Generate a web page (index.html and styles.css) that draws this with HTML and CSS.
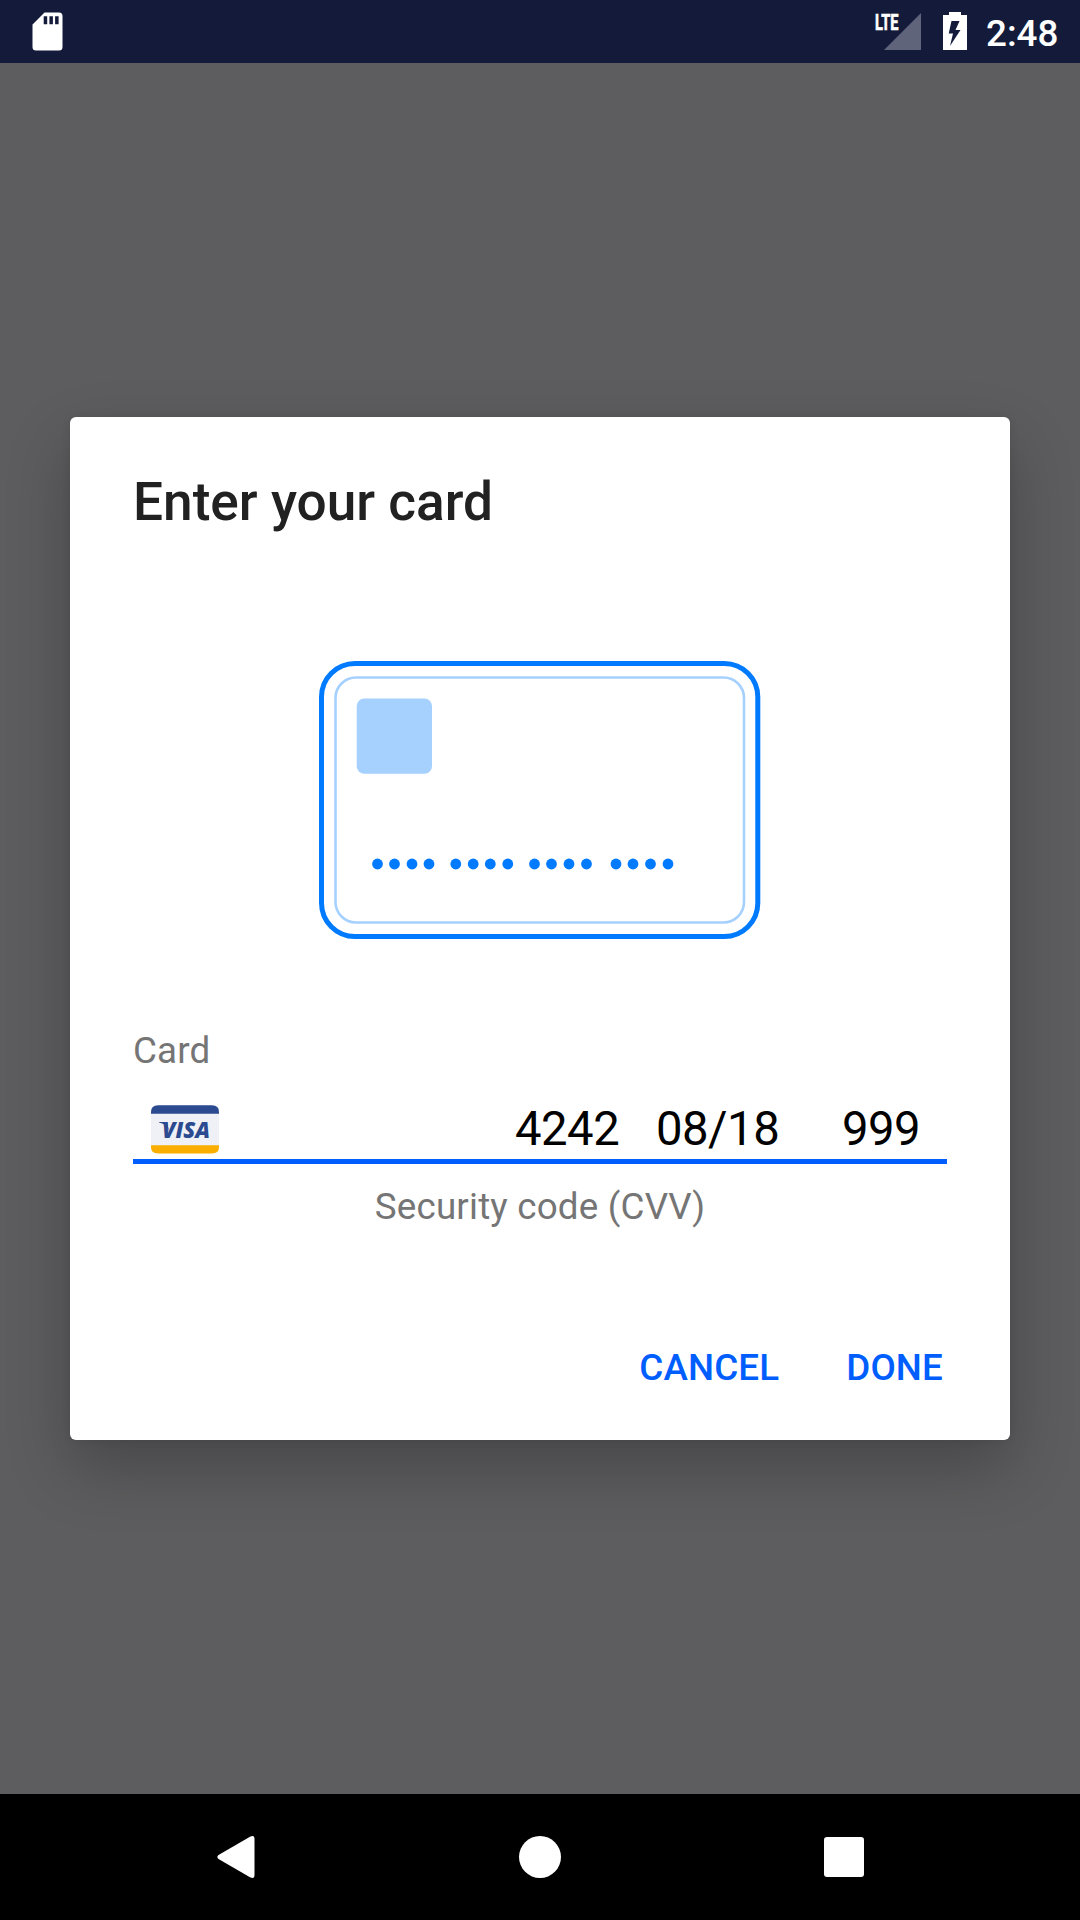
FILE: index.html
```html
<!DOCTYPE html>
<html lang="en">
<head>
<meta charset="utf-8">
<title>Enter your card</title>
<link rel="stylesheet" href="styles.css">
</head>
<body>
<div class="screen">
  <header class="status-bar">
    <svg class="sd-icon" width="32" height="40" viewBox="0 0 32 40">
      <path fill="#fff" fill-rule="evenodd" d="M12.500 .5H27Q30.500 .5 30.500 4V35Q30.500 38.500 27 38.500H4Q.5 38.500 .5 35V12.500ZM11.700 4.300V12.200H15.200V4.300ZM17.400 4.300V12.200H20.900V4.300ZM23.100 4.300V12.200H26.600V4.300Z"/>
    </svg>
    <div class="status-right">
      <svg class="signal-icon" width="52" height="40" viewBox="-4 0 52 40">
        <path d="M47 1V38H10Z" fill="#5f647a"/>
        <text class="lte" x="1" y="17.800" textLength="23.500" lengthAdjust="spacingAndGlyphs">LTE</text>
      </svg>
      <svg class="battery-icon" width="24" height="38" viewBox="0 0 24 38">
        <path fill="#fff" d="M6 0H18V3H24V38H0V3H6Z"/>
        <path fill="#141b3a" d="M8.500 9H16.500L12.500 18H17.500L7 34L10 21.500H5.700Z"/>
      </svg>
      <span class="clock">2:48</span>
    </div>
  </header>

  <main class="scrim">
    <section class="dialog">
      <h1 class="title">Enter your card</h1>
      <svg class="card-art" width="442" height="278" viewBox="319 661 442 278">
        <rect x="321.500" y="663.500" width="436.300" height="273" rx="33.500" fill="none" stroke="#007aff" stroke-width="5"/>
        <rect x="335.500" y="677.500" width="408.500" height="245" rx="20.500" fill="none" stroke="#a6d1ff" stroke-width="2.600"/>
        <rect x="356.700" y="698.500" width="75.300" height="75.300" rx="7.500" fill="#a6d1ff"/>
        <g fill="#007aff">
          <circle cx="377.500" cy="864" r="5.400"/><circle cx="394.500" cy="864" r="5.400"/><circle cx="412" cy="864" r="5.400"/><circle cx="429" cy="864" r="5.400"/>
          <circle cx="455.800" cy="864" r="5.400"/><circle cx="473.200" cy="864" r="5.400"/><circle cx="490.300" cy="864" r="5.400"/><circle cx="507.800" cy="864" r="5.400"/>
          <circle cx="534.500" cy="864" r="5.400"/><circle cx="551.500" cy="864" r="5.400"/><circle cx="569" cy="864" r="5.400"/><circle cx="586.500" cy="864" r="5.400"/>
          <circle cx="616" cy="864" r="5.400"/><circle cx="633" cy="864" r="5.400"/><circle cx="650.500" cy="864" r="5.400"/><circle cx="668" cy="864" r="5.400"/>
        </g>
      </svg>
      <div class="label">Card</div>
      <div class="field">
        <svg class="visa" width="68" height="49" viewBox="0 0 68 49">
          <path d="M0 8H68V41H0Z" fill="#eff1f6"/>
          <path d="M0 8.700V7Q0 .3 7 .3H61Q68 .3 68 7V8.700Z" fill="#2b4a90"/>
          <path d="M0 40.300H68V42Q68 48.500 61 48.500H7Q0 48.500 0 42Z" fill="#f9ae00"/>
          <path d="M8 17H16L18 26Q15 18.500 8 17.500Z" fill="#2b4a90"/>
          <text class="visa-text" x="11" y="32.700" textLength="48" lengthAdjust="spacingAndGlyphs">VISA</text>
        </svg>
        <span>4242</span>
        <span>08/18</span>
        <span>999</span>
      </div>
      <div class="hint">Security code (CVV)</div>
      <div class="actions">
        <span>CANCEL</span>
        <span>DONE</span>
      </div>
    </section>
  </main>

  <nav class="nav-bar">
    <svg width="38" height="42" viewBox="0 0 38 42"><path fill="#fff" d="M33 .7Q37.500-1.500 37.500 3V39Q37.500 43.500 33 41.300L1.500 23Q-.8 21 1.500 19Z"/></svg>
    <svg width="42" height="42" viewBox="0 0 42 42"><circle cx="21" cy="21" r="21" fill="#fff"/></svg>
    <svg width="40" height="40" viewBox="0 0 40 40"><rect width="40" height="40" rx="3" fill="#fff"/></svg>
  </nav>
</div>
</body>
</html>
```
FILE: styles.css
```css
* { box-sizing: border-box; }

body {
  margin: 0;
  font-family: Roboto, "Liberation Sans", sans-serif;
}

svg { display: block; flex: none; overflow: visible; }

.screen {
  display: flex;
  flex-direction: column;
  width: 1080px;
  height: 1920px;
  overflow: hidden;
}

.status-bar {
  display: flex;
  justify-content: space-between;
  align-items: flex-start;
  height: 63px;
  padding: 12px 21px 0 32px;
  background: #141b3a;
}

.status-right { display: flex; }

.signal-icon { margin-right: 21px; }

.lte {
  font-size: 22.5px;
  font-weight: 700;
  fill: #fff;
  stroke: #fff;
  stroke-width: 0.7px;
}

.battery-icon { margin-right: 19px; }

.clock {
  width: 73px;
  font-size: 36.75px;
  font-weight: 500;
  line-height: 43px;
  color: #fff;
}

.scrim {
  flex: 1;
  padding: 354px 70px 0;
  background: #5d5d5f;
}

.dialog {
  display: flex;
  flex-direction: column;
  height: 1023px;
  padding: 54px 63px 0;
  border-radius: 6px;
  background: #fff;
  box-shadow: 0 28px 64px rgba(0, 0, 0, 0.24), 0 0 10px rgba(0, 0, 0, 0.08);
}

.title {
  margin: 0;
  font-size: 53.2px;
  font-weight: 500;
  line-height: 62px;
  color: #212121;
}

.card-art { margin: 128px 0 0 186px; }

.label,
.hint {
  font-size: 36.75px;
  letter-spacing: 0.2px;
  line-height: 43px;
  color: #757575;
}

.label { margin-top: 90px; }

.field {
  display: grid;
  grid-template-columns: 364px 141px 186px 1fr;
  height: 92px;
  padding: 30px 0 0 18px;
  border-bottom: 5px solid #005eff;
  font-size: 47.25px;
  letter-spacing: -0.5px;
  line-height: 55px;
  color: #000;
}

.visa { margin-top: 3px; }

.visa-text {
  font-family: "Open Sans", sans-serif;
  font-size: 22.5px;
  font-weight: 800;
  font-style: italic;
  letter-spacing: 0;
  fill: #2b4a90;
}

.hint {
  margin-top: 21px;
  text-align: center;
}

.actions {
  display: flex;
  justify-content: flex-end;
  gap: 67px;
  margin-top: 118px;
  padding-right: 4px;
  font-size: 36.75px;
  font-weight: 500;
  letter-spacing: 0.15px;
  line-height: 43px;
  color: #005eff;
}

.nav-bar {
  display: flex;
  justify-content: space-between;
  align-items: center;
  height: 126px;
  padding: 0 216px 0 217px;
  background: #000;
}
```
